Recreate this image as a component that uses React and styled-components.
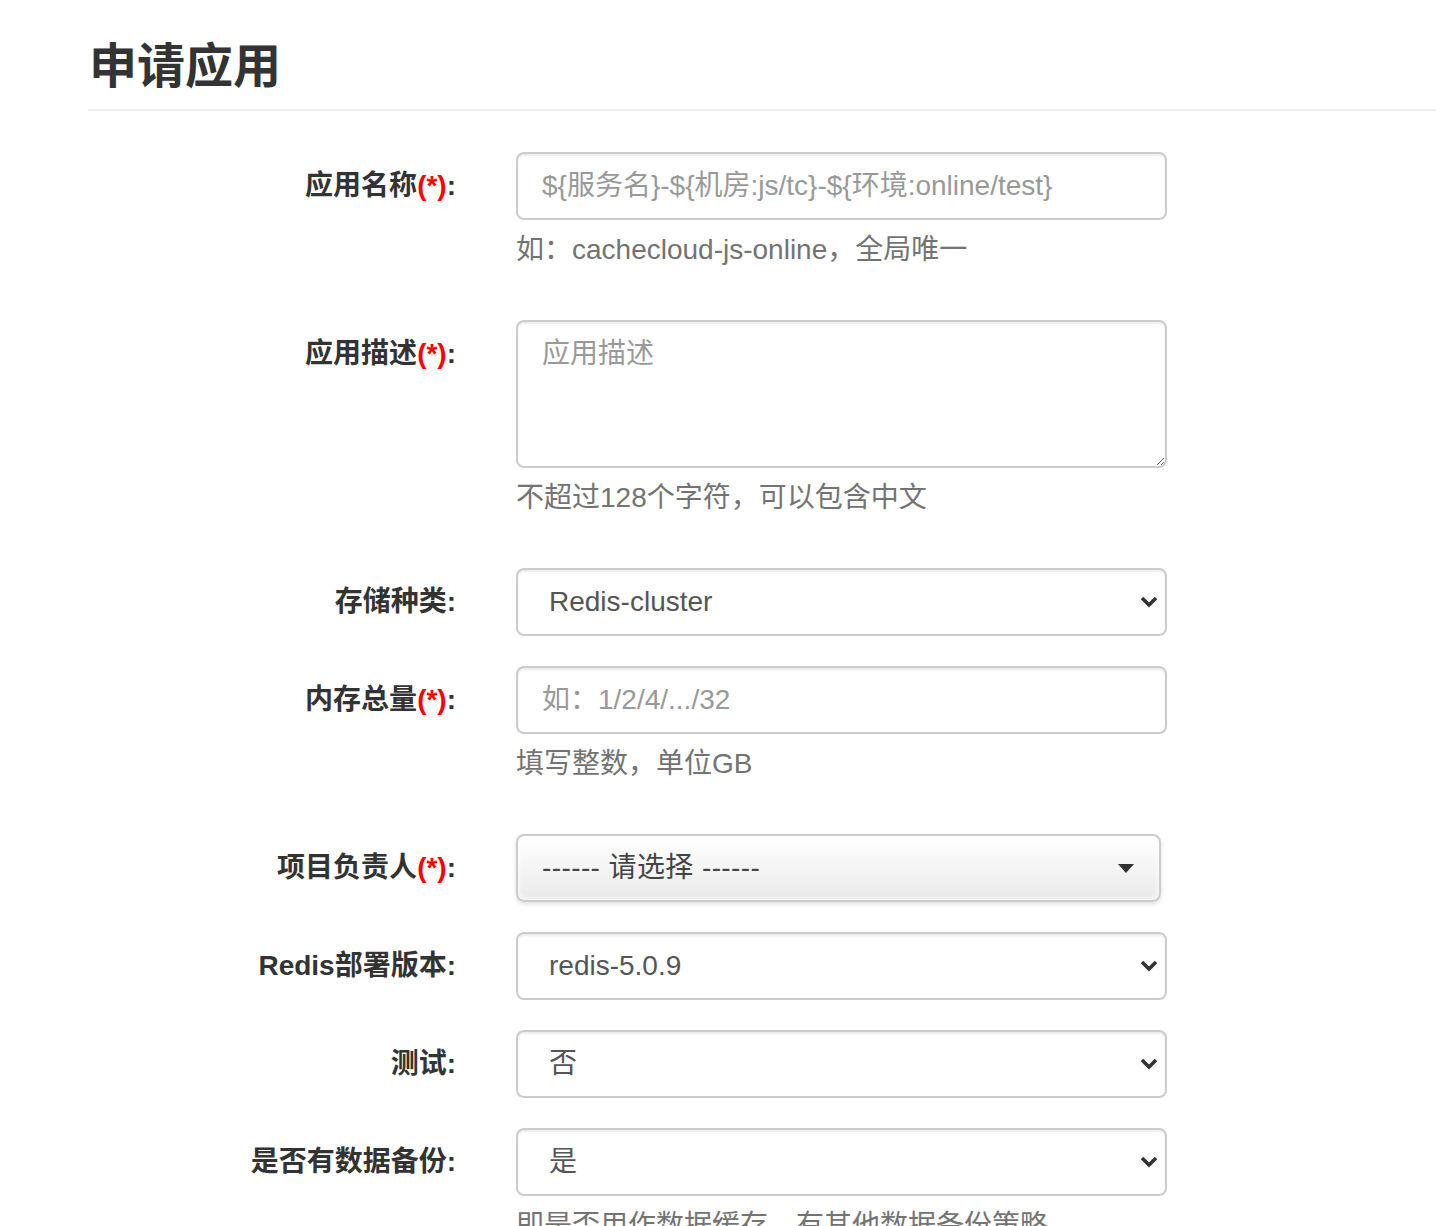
import React from "react";
import styled, { createGlobalStyle } from "styled-components";

const GlobalStyle = createGlobalStyle`
  html, body {
    margin: 0;
    padding: 0;
    background: #fff;
  }
  body {
    font-family: "Liberation Sans", "Noto Sans CJK SC", sans-serif;
    font-size: 28px;
    line-height: 40px;
    color: #333;
  }
`;

const Page = styled.div`
  padding-left: 88px;
  padding-bottom: 80px;
`;

const Header = styled.div`
  padding: 40px 0 16px 1px;
  border-bottom: 2px solid #eee;
  margin-bottom: 41px;
`;

const Title = styled.h1`
  margin: 0;
  font-size: 48px;
  line-height: 53px;
  font-weight: bold;
  color: #333;
`;

const Form = styled.form`
  display: flex;
  flex-direction: column;
`;

const Group = styled.div`
  display: grid;
  grid-template-columns: 368px 651px;
  column-gap: 60px;
  margin-bottom: 30px;
`;

const Label = styled.label`
  text-align: right;
  font-weight: bold;
  padding-top: 14px;
  line-height: 40px;
  color: #333;
  white-space: nowrap;
`;

const Req = styled.span`
  color: #f00;
`;

const Control = styled.div`
  display: flex;
  flex-direction: column;
`;

const Input = styled.input`
  box-sizing: border-box;
  width: 651px;
  height: 68px;
  padding: 12px 24px;
  font: inherit;
  font-size: 28px;
  color: #555;
  border: 2px solid #ccc;
  border-radius: 8px;
  box-shadow: inset 0 2px 2px rgba(0, 0, 0, 0.075);
  outline: none;
  &::placeholder {
    color: #999;
  }
`;

const TextArea = styled.textarea`
  box-sizing: border-box;
  width: 651px;
  height: 148px;
  padding: 12px 24px;
  font: inherit;
  font-size: 28px;
  line-height: 40px;
  color: #555;
  border: 2px solid #ccc;
  border-radius: 8px;
  box-shadow: inset 0 2px 2px rgba(0, 0, 0, 0.075);
  outline: none;
  resize: vertical;
  &::placeholder {
    color: #999;
  }
`;

const SelectWrap = styled.div`
  position: relative;
  width: 651px;
`;

const Select = styled.select`
  box-sizing: border-box;
  width: 100%;
  height: 68px;
  padding: 0 60px 0 31px;
  font: inherit;
  font-size: 28px;
  color: #555;
  background: #fff;
  border: 2px solid #ccc;
  border-radius: 8px;
  box-shadow: inset 0 2px 2px rgba(0, 0, 0, 0.075);
  appearance: none;
  outline: none;
`;

const Chevron = styled.svg`
  position: absolute;
  right: 9px;
  top: 28px;
  pointer-events: none;
`;

const Chosen = styled.div`
  box-sizing: border-box;
  width: 645px;
  height: 68px;
  display: flex;
  align-items: center;
  justify-content: space-between;
  padding: 0 24px 0 24px;
  color: #444;
  border: 2px solid #ccc;
  border-radius: 8px;
  background: linear-gradient(#fff 0%, #f7f7f7 40%, #e9e9e9 100%);
  box-shadow: inset 0 0 6px #fff, 0 2px 4px rgba(0, 0, 0, 0.12);
  cursor: pointer;
`;

const ChosenText = styled.span`
  letter-spacing: 0.4px;
`;

const Caret = styled.span`
  width: 0;
  height: 0;
  border-left: 8px solid transparent;
  border-right: 8px solid transparent;
  border-top: 9px solid #333;
  margin-right: 1px;
`;

const Help = styled.span`
  display: block;
  margin: 10px 0 20px;
  color: #737373;
  line-height: 40px;
  white-space: nowrap;
`;

const SelectField = ({ value, options }) => (
  <SelectWrap>
    <Select defaultValue={value}>
      {options.map((o) => (
        <option key={o} value={o}>{o}</option>
      ))}
    </Select>
    <Chevron width="18" height="12" viewBox="0 0 18 12">
      <polyline points="2,2 9,9 16,2" fill="none" stroke="#333" strokeWidth="3.6" />
    </Chevron>
  </SelectWrap>
);

const RequiredLabel = ({ children }) => (
  <Label>
    {children}<Req>(*)</Req>:
  </Label>
);

export default function App() {
  return (
    <Page>
      <GlobalStyle />
      <Header>
        <Title>申请应用</Title>
      </Header>
      <Form onSubmit={(e) => e.preventDefault()}>
        <Group>
          <RequiredLabel>应用名称</RequiredLabel>
          <Control>
            <Input placeholder="${服务名}-${机房:js/tc}-${环境:online/test}" />
            <Help>如：cachecloud-js-online，全局唯一</Help>
          </Control>
        </Group>
        <Group>
          <RequiredLabel>应用描述</RequiredLabel>
          <Control>
            <TextArea placeholder="应用描述" />
            <Help>不超过128个字符，可以包含中文</Help>
          </Control>
        </Group>
        <Group>
          <Label>存储种类:</Label>
          <Control>
            <SelectField value="Redis-cluster" options={["Redis-cluster", "Redis-sentinel", "Redis-standalone"]} />
          </Control>
        </Group>
        <Group>
          <RequiredLabel>内存总量</RequiredLabel>
          <Control>
            <Input placeholder="如：1/2/4/.../32" />
            <Help>填写整数，单位GB</Help>
          </Control>
        </Group>
        <Group>
          <RequiredLabel>项目负责人</RequiredLabel>
          <Control>
            <Chosen>
              <ChosenText>------ 请选择 ------</ChosenText>
              <Caret />
            </Chosen>
          </Control>
        </Group>
        <Group>
          <Label>Redis部署版本:</Label>
          <Control>
            <SelectField value="redis-5.0.9" options={["redis-5.0.9", "redis-4.0.14", "redis-3.2.12"]} />
          </Control>
        </Group>
        <Group>
          <Label>测试:</Label>
          <Control>
            <SelectField value="否" options={["否", "是"]} />
          </Control>
        </Group>
        <Group>
          <Label>是否有数据备份:</Label>
          <Control>
            <SelectField value="是" options={["是", "否"]} />
            <Help>即是否用作数据缓存，有其他数据备份策略</Help>
          </Control>
        </Group>
      </Form>
    </Page>
  );
}
